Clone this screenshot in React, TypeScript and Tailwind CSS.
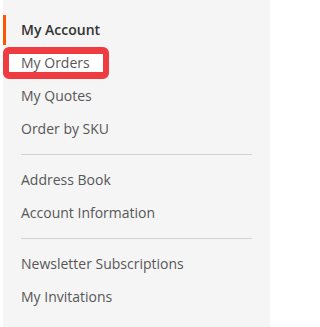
import React from 'react';

type NavItem = { label: string; current?: boolean; marked?: boolean } | { divider: true };

const items: NavItem[] = [
  { label: 'My Account', current: true },
  { label: 'My Orders', marked: true },
  { label: 'My Quotes' },
  { label: 'Order by SKU' },
  { divider: true },
  { label: 'Address Book' },
  { label: 'Account Information' },
  { divider: true },
  { label: 'Newsletter Subscriptions' },
  { label: 'My Invitations' },
];

export default function App() {
  return (
    <div className="min-h-[327px] bg-white" style={{ fontFamily: '"Open Sans", "Liberation Sans", sans-serif' }}>
      <div className="ml-[3px] w-[267px] bg-[#f5f5f5] py-[15px]">
        <ul className="flow-root">
          {items.map((item, i) => {
            if ('divider' in item) {
              return (
                <li key={i}>
                  <span className="mx-[18px] my-[10px] block border-t border-[#d1d1d1]" />
                </li>
              );
            }
            return (
              <li key={i} className={`relative ${i === 0 ? '' : 'mt-[3px]'}`}>
                {/* annotation box round the highlighted link */}
                {item.marked && (
                  <div className="absolute left-0 top-[-1px] h-[32px] w-[106px] rounded-[6px] border-x-[6px] border-y-[7px] border-[#ef3c40] bg-white" />
                )}
                {item.current ? (
                  <strong className="relative block border-l-[3px] border-[#ff5501] py-[5px] pl-[15px] pr-[18px] text-[14px] leading-[20px] font-semibold text-[#333333]">
                    {item.label}
                  </strong>
                ) : (
                  <a
                    href="#"
                    className="relative block border-l-[3px] border-transparent py-[5px] pl-[15px] pr-[18px] text-[14px] leading-[20px] text-[#575757] no-underline"
                  >
                    {item.label}
                  </a>
                )}
              </li>
            );
          })}
        </ul>
      </div>
    </div>
  );
}
